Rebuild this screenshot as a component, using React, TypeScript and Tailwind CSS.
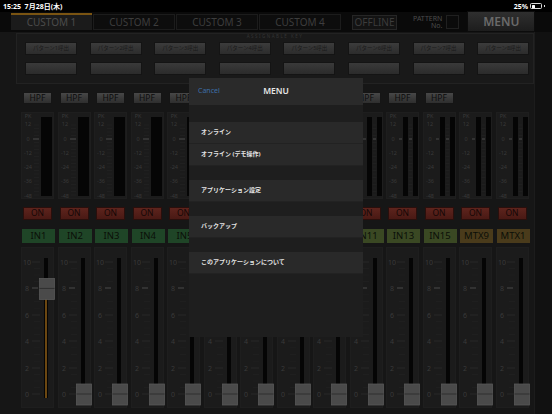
import React from "react";

type Kind = "mono" | "stereo" | "mtx";

interface Channel {
  name: string;
  kind: Kind;
  level: number; // fader position, 0..10
}

const channels: Channel[] = [
  { name: "IN1", kind: "mono", level: 8 },
  { name: "IN2", kind: "mono", level: 0 },
  { name: "IN3", kind: "mono", level: 0 },
  { name: "IN4", kind: "mono", level: 0 },
  { name: "IN5", kind: "mono", level: 0 },
  { name: "IN6", kind: "mono", level: 0 },
  { name: "IN7", kind: "mono", level: 0 },
  { name: "IN8", kind: "mono", level: 0 },
  { name: "IN9", kind: "stereo", level: 0 },
  { name: "IN11", kind: "stereo", level: 0 },
  { name: "IN13", kind: "stereo", level: 0 },
  { name: "IN15", kind: "stereo", level: 0 },
  { name: "MTX9", kind: "mtx", level: 0 },
  { name: "MTX1", kind: "mtx", level: 0 },
];

const labelBg: Record<Kind, string> = {
  mono: "bg-[#1f4527]",
  stereo: "bg-[#3a4823]",
  mtx: "bg-[#4a3b1b]",
};

const font = { fontFamily: '"Noto Sans", "Noto Sans CJK JP", sans-serif' };

function Meter({ stereo }: { stereo: boolean }) {
  const labels: [string, number][] = [
    ["PK", 5],
    ["12", 13],
    ["0", 28],
    ["-12", 42],
    ["-24", 56],
    ["-36", 70],
    ["-48", 85],
  ];
  const ticks = [];
  for (let y = 12; y <= 83; y += 3.5) ticks.push(y);
  return (
    <svg width="33" height="87" className="block">
      {labels.map(([t, y]) => (
        <text key={t} x="6" y={y} fontSize="5.5" textAnchor="middle" fill="#3a3a3a" fontFamily="Noto Sans, sans-serif">
          {t}
        </text>
      ))}
      {stereo ? (
        <>
          {ticks.map((y) => (
            <line key={y} x1="21.5" x2="25.5" y1={y} y2={y} stroke="#252525" strokeWidth="0.6" />
          ))}
          <rect x="16" y="4" width="5" height="79" fill="#050505" />
          <rect x="26" y="4" width="5" height="79" fill="#050505" />
          <line x1="12" x2="15" y1="26" y2="26" stroke="#555" strokeWidth="0.8" />
          <line x1="22" x2="25" y1="26" y2="26" stroke="#555" strokeWidth="0.8" />
        </>
      ) : (
        <>
          {ticks.map((y) => (
            <line key={y} x1="12" x2="17" y1={y} y2={y} stroke="#252525" strokeWidth="0.6" />
          ))}
          <rect x="19" y="4" width="11" height="79" fill="#050505" />
          <line x1="11" x2="17" y1="26" y2="26" stroke="#555" strokeWidth="0.8" />
        </>
      )}
    </svg>
  );
}

function Fader({ level }: { level: number }) {
  const ys = [14, 40, 67, 93, 120, 146];
  const names = ["10", "8", "6", "4", "2", "0"];
  const minor: number[] = [];
  for (let i = 0; i < 5; i++) {
    for (let j = 1; j < 4; j++) minor.push(ys[i] + ((ys[i + 1] - ys[i]) * j) / 4);
  }
  const cy = 146 - (level / 10) * 132;
  return (
    <svg width="33" height="161" className="block">
      {ys.map((y, i) => (
        <g key={y}>
          <text x="5" y={y + 2.5} fontSize="7" textAnchor="middle" fill="#3a3a3a" fontFamily="Noto Sans, sans-serif">
            {names[i]}
          </text>
          <line
            x1="10"
            x2={i === 1 ? 16 : 18}
            y1={y}
            y2={y}
            stroke={i === 1 ? "#575757" : "#2c2c2c"}
            strokeWidth="0.8"
          />
        </g>
      ))}
      {minor.map((y) => (
        <line key={y} x1="12" x2="18" y1={y} y2={y} stroke="#242424" strokeWidth="0.6" />
      ))}
      <rect x="22" y="10" width="4" height="140" fill="#050505" />
      {level > 0 && <rect x="23" y={cy + 10} width="2" height={150 - cy - 10} fill="#6b4711" />}
      <rect x="17.5" y={cy - 10} width="15" height="21" fill="#4a4a4a" stroke="#585858" strokeWidth="0.8" />
      <line x1="17.5" x2="32.5" y1={cy} y2={cy} stroke="#2e2e2e" strokeWidth="1" />
    </svg>
  );
}

function Strip({ ch }: { ch: Channel }) {
  return (
    <div className="flex flex-col">
      {ch.kind === "mtx" ? (
        <div className="h-[12px]" />
      ) : (
        <div className="ml-[2px] w-[29px] h-[12px] flex items-center justify-center bg-gradient-to-b from-[#474747] to-[#2e2e2e] border border-[#151515] text-[8.5px] leading-none text-[#0c0c0c]">
          HPF
        </div>
      )}
      <div className="mt-[8px] w-[33px] h-[87px] bg-[#1b1b1b] border border-[#1e1e1e]">
        <Meter stereo={ch.kind !== "mono"} />
      </div>
      <div className="mt-[8px] ml-[2px] w-[29px] h-[13px] flex items-center justify-center bg-gradient-to-b from-[#5e241d] to-[#491914] border border-[#2a0f0c] text-[8.5px] leading-none text-[#140706]">
        ON
      </div>
      <div
        className={`mt-[9px] ml-[1px] w-[33px] h-[14px] flex items-center justify-center overflow-hidden ${labelBg[ch.kind]} text-[9.5px] leading-none text-[#0b0f08]`}
      >
        {ch.name}
      </div>
      <div className="mt-[4px] w-[33px] h-[161px] bg-[#1b1b1b] border border-[#1e1e1e]">
        <Fader level={ch.level} />
      </div>
    </div>
  );
}

function Tab({ label, active }: { label: string; active?: boolean }) {
  return (
    <div
      className={
        active
          ? "w-[81px] h-[17px] flex items-center justify-center bg-[#1b1b1b] border-t-2 border-[#7a5412] text-[10px] text-[#4c4c4c]"
          : "w-[82px] h-[16px] flex items-center justify-center bg-[#0d0d0d] border border-[#1c1c1c] text-[10px] text-[#3d3d3d]"
      }
    >
      {label}
    </div>
  );
}

const menuItems: (string | null)[] = [
  null,
  "オンライン",
  "オフライン (デモ操作)",
  null,
  "アプリケーション設定",
  null,
  "バックアップ",
  null,
  "このアプリケーションについて",
];

function MenuSheet() {
  return (
    <div className="absolute left-[189px] top-[78px] w-[174px] h-[259px] bg-[#1e1e1e] flex flex-col" style={font}>
      <div className="relative h-[27px] bg-[#2a2a2a] flex items-center justify-center">
        <span className="absolute left-[9px] text-[7px] text-[#3d6ea8]">Cancel</span>
        <span className="text-[8.5px] font-semibold text-[#e6e6e6]">MENU</span>
      </div>
      {menuItems.map((item, i) =>
        item === null ? (
          <div key={i} className={i === 0 ? "h-[17px]" : "h-[14px]"} />
        ) : (
          <div
            key={i}
            className="h-[22px] flex items-center pl-[12px] bg-[#292929] border-b border-[#222] text-[6px] font-bold text-[#e4e4e4]"
          >
            {item}
          </div>
        )
      )}
    </div>
  );
}

export default function App() {
  return (
    <div className="relative w-[552px] h-[414px] overflow-hidden bg-[#161616] select-none" style={font}>
      {/* status bar */}
      <div className="h-[12px] bg-black flex items-center justify-between px-[3px] text-white text-[7px] font-bold leading-none">
        <span>15:25&nbsp;&nbsp;7月28日(木)</span>
        <span className="flex items-center gap-[2px] pr-[4px]">
          25%
          <span className="w-[12px] h-[6px] rounded-[1.5px] border border-[#ddd] p-[0.5px] flex">
            <span className="w-[3px] bg-white rounded-[0.5px]" />
          </span>
          <span className="w-[1px] h-[2px] bg-[#ddd]" />
        </span>
      </div>

      {/* tab row */}
      <div className="h-[20px] bg-[#0a0a0a] flex items-end">
        <div className="flex items-end gap-[1px] ml-[11px] pb-[2px]">
          <Tab label="CUSTOM 1" active />
          <Tab label="CUSTOM 2" />
          <Tab label="CUSTOM 3" />
          <Tab label="CUSTOM 4" />
        </div>
        <div className="self-center ml-[11px] w-[45px] h-[15px] flex items-center justify-center bg-[#131313] border border-[#262626] text-[10px] text-[#3c3c3c]">
          OFFLINE
        </div>
        <div className="self-center ml-[16px] flex flex-col items-end text-[7px] leading-[7px] text-[#4a4a4a]">
          <span>PATTERN</span>
          <span>No.</span>
        </div>
        <div className="self-center ml-[4px] w-[13px] h-[14px] bg-[#0b0b0b] border border-[#202020]" />
        <div className="self-center ml-[8px] mb-[1px] w-[68px] h-[21px] flex items-center justify-center bg-gradient-to-b from-[#2f2f2f] to-[#1d1d1d] border border-[#0c0c0c] text-[12px] font-semibold text-[#6a6a6a]">
          MENU
        </div>
      </div>

      {/* body */}
      <div className="flex h-[382px]">
        <div className="w-[534px] flex flex-col">
          {/* assignable keys */}
          <div className="mt-[1px] ml-[16px] w-[518px] h-[51px] bg-[#191919] border border-[#222] flex flex-col">
            <div className="h-[7px] flex items-start justify-center text-[4.5px] tracking-[1.5px] leading-none text-[#343434]">
              ASSIGNABLE KEY
            </div>
            <div className="ml-[8px] mt-[1px] flex gap-[12.6px]">
              {[1, 2, 3, 4, 5, 6, 7, 8].map((n) => (
                <div
                  key={n}
                  className="w-[52px] h-[13px] flex items-center justify-center bg-gradient-to-b from-[#3c3c3c] to-[#2c2c2c] border border-[#141414] text-[5.5px] leading-none text-[#1a1a1a]"
                >
                  パターン{n}呼出
                </div>
              ))}
            </div>
            <div className="ml-[8px] mt-[7px] flex gap-[12.6px]">
              {[1, 2, 3, 4, 5, 6, 7, 8].map((n) => (
                <div
                  key={n}
                  className="w-[52px] h-[13px] bg-gradient-to-b from-[#3a3a3a] to-[#2b2b2b] border border-[#141414]"
                />
              ))}
            </div>
          </div>

          {/* channel strips */}
          <div className="mt-[8px] ml-[21px] grid grid-cols-[repeat(14,36.5px)]">
            {channels.map((ch) => (
              <Strip key={ch.name} ch={ch} />
            ))}
          </div>
        </div>
        <div className="flex-1 bg-[#111] border-l border-[#1c1c1c]" />
      </div>

      <MenuSheet />
    </div>
  );
}
